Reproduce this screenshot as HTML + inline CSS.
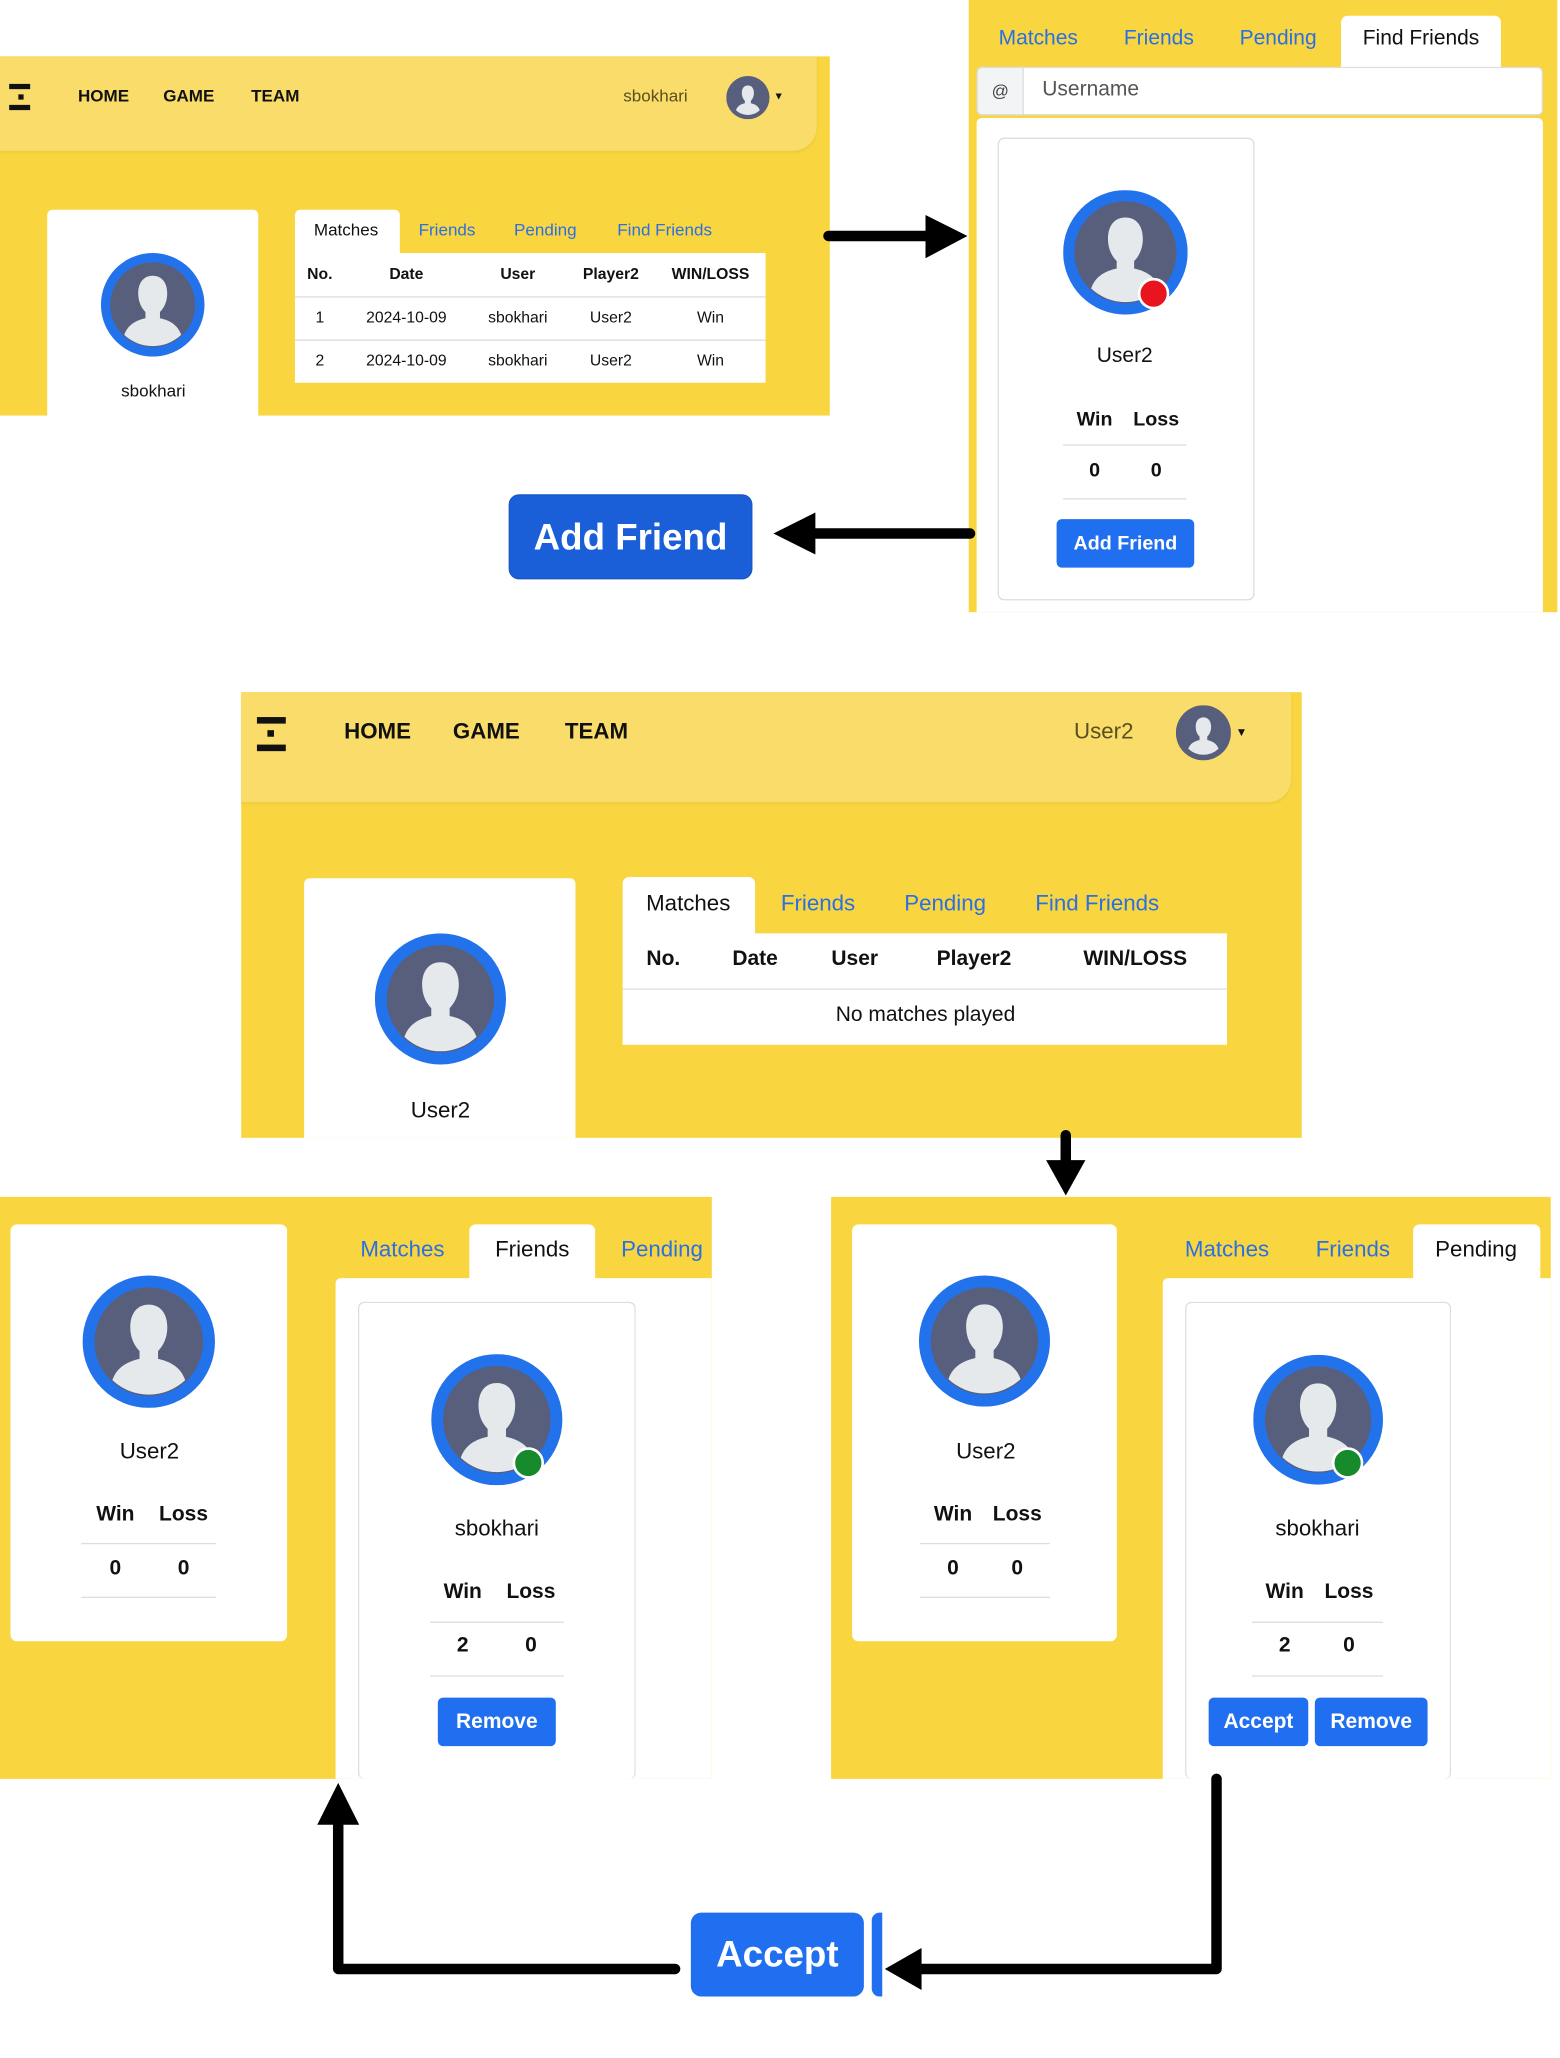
<!DOCTYPE html>
<html><head><meta charset="utf-8"><style>
html,body{margin:0;padding:0;background:#fff;width:1560px;height:2058px;overflow:hidden}
#w{position:absolute;left:0;top:0;width:1190px;height:1570px;transform:scale(1.3109);transform-origin:0 0;font-family:"Liberation Sans",sans-serif;color:#111}
.a{position:absolute}
.t{position:absolute;white-space:nowrap;transform:translate(-50%,-50%);line-height:1}
.b{font-weight:bold}
.y{background:#f9d63f}
.nav{background:#fadc6a;border-bottom-right-radius:18px;box-shadow:0 1px 2px rgba(0,0,0,.06)}
.wh{background:#fff}
.card{background:#fff;border:1px solid #ddd;border-radius:5px;box-sizing:border-box}
.blue{color:#2a6fe3}
.btn{position:absolute;background:#1f6ff0;color:#fff;font-weight:bold;border-radius:4px;display:flex;align-items:center;justify-content:center}
.ln{position:absolute;height:1px;background:#ddd}
svg.av{position:absolute}
</style></head><body><div id="w">

<!-- Panel 1 -->
<div class="a y" style="left:0;top:43px;width:633px;height:274px"></div>
<div class="a nav" style="left:0;top:43px;width:623px;height:72px"></div>
<div class="a" style="left:7px;top:64px;width:16px;height:4px;background:#111"></div>
<div class="a" style="left:14px;top:72px;width:4px;height:4px;background:#111"></div>
<div class="a" style="left:7px;top:80px;width:16px;height:4px;background:#111"></div>
<div class="t b" style="left:79px;top:73px;font-size:13px">HOME</div>
<div class="t b" style="left:144px;top:73px;font-size:13px">GAME</div>
<div class="t b" style="left:210px;top:73px;font-size:13px">TEAM</div>
<div class="t" style="left:500px;top:73px;font-size:13px;color:#5a4f1f">sbokhari</div>
<svg class="av" style="left:554px;top:58px" width="33" height="33" viewBox="0 0 100 100"><circle cx="50" cy="50" r="50" fill="#585f7d"/><path d="M50 22c-9 0-14 7-14 17c0 8 3 14 7 18v6c-9 2-17 6-20.5 16A40 40 0 0 0 77.5 79c-3.5-10-11.5-14-20.5-16v-6c4-4 7-10 7-18c0-10-5-17-14-17z" fill="#e6e9eb"/></svg>
<div class="t" style="left:594px;top:74px;font-size:8px">▼</div>

<div class="a wh" style="left:36px;top:160px;width:161px;height:157px;border-radius:4px 4px 0 0"></div>
<svg class="av" style="left:77px;top:193px" width="79" height="79" viewBox="0 0 100 100"><circle cx="50" cy="50" r="50" fill="#2272ec"/><circle cx="50" cy="50" r="41" fill="#585f7d"/><path d="M50 22c-9 0-14 7-14 17c0 8 3 14 7 18v6c-9 2-17 6-20.5 16A40 40 0 0 0 77.5 79c-3.5-10-11.5-14-20.5-16v-6c4-4 7-10 7-18c0-10-5-17-14-17z" fill="#e6e9eb"/></svg>
<div class="t" style="left:117px;top:298px;font-size:13px">sbokhari</div>

<div class="a wh" style="left:225px;top:160px;width:80px;height:34px;border-radius:4px 4px 0 0"></div>
<div class="t" style="left:264px;top:175px;font-size:13px">Matches</div>
<div class="t blue" style="left:341px;top:175px;font-size:13px">Friends</div>
<div class="t blue" style="left:416px;top:175px;font-size:13px">Pending</div>
<div class="t blue" style="left:507px;top:175px;font-size:13px">Find Friends</div>
<div class="a wh" style="left:225px;top:193px;width:359px;height:99px"></div>
<div class="ln" style="left:225px;top:226px;width:359px"></div>
<div class="ln" style="left:225px;top:259px;width:359px"></div>
<div class="t b" style="left:244px;top:209px;font-size:12px">No.</div>
<div class="t b" style="left:310px;top:209px;font-size:12px">Date</div>
<div class="t b" style="left:395px;top:209px;font-size:12px">User</div>
<div class="t b" style="left:466px;top:209px;font-size:12px">Player2</div>
<div class="t b" style="left:542px;top:209px;font-size:12px">WIN/LOSS</div>
<div class="t" style="left:244px;top:242px;font-size:12px">1</div>
<div class="t" style="left:310px;top:242px;font-size:12px">2024-10-09</div>
<div class="t" style="left:395px;top:242px;font-size:12px">sbokhari</div>
<div class="t" style="left:466px;top:242px;font-size:12px">User2</div>
<div class="t" style="left:542px;top:242px;font-size:12px">Win</div>
<div class="t" style="left:244px;top:275px;font-size:12px">2</div>
<div class="t" style="left:310px;top:275px;font-size:12px">2024-10-09</div>
<div class="t" style="left:395px;top:275px;font-size:12px">sbokhari</div>
<div class="t" style="left:466px;top:275px;font-size:12px">User2</div>
<div class="t" style="left:542px;top:275px;font-size:12px">Win</div>

<!-- Panel 2 -->
<div class="a y" style="left:739px;top:0;width:449px;height:467px"></div>
<div class="t blue" style="left:792px;top:30px;font-size:16px">Matches</div>
<div class="t blue" style="left:884px;top:30px;font-size:16px">Friends</div>
<div class="t blue" style="left:975px;top:30px;font-size:16px">Pending</div>
<div class="a wh" style="left:1023px;top:12px;width:122px;height:40px;border-radius:5px 5px 0 0"></div>
<div class="t" style="left:1084px;top:30px;font-size:16px">Find Friends</div>
<div class="a wh" style="left:745px;top:51px;width:432px;height:37px;border:1px solid #ddd;border-radius:4px;box-sizing:border-box"></div>
<div class="a" style="left:745px;top:51px;width:36px;height:37px;background:#f3f4f5;border:1px solid #ddd;border-radius:4px 0 0 4px;box-sizing:border-box"></div>
<div class="t" style="left:763px;top:69px;font-size:13px;color:#444">@</div>
<div class="t" style="left:832px;top:69px;font-size:16px;color:#555">Username</div>
<div class="a wh" style="left:745px;top:90px;width:432px;height:377px;border-radius:4px 4px 0 0"></div>
<div class="a card" style="left:761px;top:105px;width:196px;height:353px"></div>
<svg class="av" style="left:811px;top:145px" width="95" height="95" viewBox="0 0 100 100"><circle cx="50" cy="50" r="50" fill="#2272ec"/><circle cx="50" cy="50" r="41" fill="#585f7d"/><path d="M50 22c-9 0-14 7-14 17c0 8 3 14 7 18v6c-9 2-17 6-20.5 16A40 40 0 0 0 77.5 79c-3.5-10-11.5-14-20.5-16v-6c4-4 7-10 7-18c0-10-5-17-14-17z" fill="#e6e9eb"/></svg>
<div class="a" style="left:868px;top:212px;width:20px;height:20px;border-radius:50%;background:#e8141e;border:2px solid #fff"></div>
<div class="t" style="left:858px;top:272px;font-size:16px">User2</div>
<div class="t b" style="left:835px;top:320px;font-size:15px">Win</div>
<div class="t b" style="left:882px;top:320px;font-size:15px">Loss</div>
<div class="ln" style="left:811px;top:339px;width:94px"></div>
<div class="t b" style="left:835px;top:359px;font-size:15px">0</div>
<div class="t b" style="left:882px;top:359px;font-size:15px">0</div>
<div class="ln" style="left:811px;top:380px;width:94px"></div>
<div class="btn" style="left:806px;top:396px;width:105px;height:37px;font-size:15px">Add Friend</div>

<div class="btn" style="left:388px;top:377px;width:186px;height:65px;font-size:28px;background:#1b5fd8;border-radius:8px;border:1px solid #1a56c4;box-sizing:border-box">Add Friend</div>

<!-- Panel 3 -->
<div class="a y" style="left:184px;top:528px;width:809px;height:340px"></div>
<div class="a nav" style="left:184px;top:528px;width:801px;height:84px"></div>
<div class="a" style="left:196px;top:547px;width:22px;height:5px;background:#111"></div>
<div class="a" style="left:204px;top:557px;width:5px;height:5px;background:#111"></div>
<div class="a" style="left:196px;top:568px;width:22px;height:5px;background:#111"></div>
<div class="t b" style="left:288px;top:558px;font-size:17px">HOME</div>
<div class="t b" style="left:371px;top:558px;font-size:17px">GAME</div>
<div class="t b" style="left:455px;top:558px;font-size:17px">TEAM</div>
<div class="t" style="left:842px;top:558px;font-size:17px;color:#5a4f1f">User2</div>
<svg class="av" style="left:897px;top:538px" width="42" height="42" viewBox="0 0 100 100"><circle cx="50" cy="50" r="50" fill="#585f7d"/><path d="M50 22c-9 0-14 7-14 17c0 8 3 14 7 18v6c-9 2-17 6-20.5 16A40 40 0 0 0 77.5 79c-3.5-10-11.5-14-20.5-16v-6c4-4 7-10 7-18c0-10-5-17-14-17z" fill="#e6e9eb"/></svg>
<div class="t" style="left:947px;top:559px;font-size:9px">▼</div>

<div class="a wh" style="left:232px;top:670px;width:207px;height:198px;border-radius:4px 4px 0 0"></div>
<svg class="av" style="left:286px;top:712px" width="100" height="100" viewBox="0 0 100 100"><circle cx="50" cy="50" r="50" fill="#2272ec"/><circle cx="50" cy="50" r="41" fill="#585f7d"/><path d="M50 22c-9 0-14 7-14 17c0 8 3 14 7 18v6c-9 2-17 6-20.5 16A40 40 0 0 0 77.5 79c-3.5-10-11.5-14-20.5-16v-6c4-4 7-10 7-18c0-10-5-17-14-17z" fill="#e6e9eb"/></svg>
<div class="t" style="left:336px;top:847px;font-size:17px">User2</div>

<div class="a wh" style="left:475px;top:669px;width:101px;height:44px;border-radius:5px 5px 0 0"></div>
<div class="t" style="left:525px;top:689px;font-size:17px">Matches</div>
<div class="t blue" style="left:624px;top:689px;font-size:17px">Friends</div>
<div class="t blue" style="left:721px;top:689px;font-size:17px">Pending</div>
<div class="t blue" style="left:837px;top:689px;font-size:17px">Find Friends</div>
<div class="a wh" style="left:475px;top:712px;width:461px;height:85px"></div>
<div class="ln" style="left:475px;top:754px;width:461px"></div>
<div class="t b" style="left:506px;top:732px;font-size:16px">No.</div>
<div class="t b" style="left:576px;top:732px;font-size:16px">Date</div>
<div class="t b" style="left:652px;top:732px;font-size:16px">User</div>
<div class="t b" style="left:743px;top:732px;font-size:16px">Player2</div>
<div class="t b" style="left:866px;top:732px;font-size:16px">WIN/LOSS</div>
<div class="t" style="left:706px;top:775px;font-size:16px">No matches played</div>

<!-- Panel 4 -->
<div class="a y" style="left:0;top:913px;width:543px;height:444px"></div>
<div class="a card" style="left:8px;top:934px;width:211px;height:318px;border:none"></div>
<svg class="av" style="left:63px;top:973px" width="101" height="101" viewBox="0 0 100 100"><circle cx="50" cy="50" r="50" fill="#2272ec"/><circle cx="50" cy="50" r="41" fill="#585f7d"/><path d="M50 22c-9 0-14 7-14 17c0 8 3 14 7 18v6c-9 2-17 6-20.5 16A40 40 0 0 0 77.5 79c-3.5-10-11.5-14-20.5-16v-6c4-4 7-10 7-18c0-10-5-17-14-17z" fill="#e6e9eb"/></svg>
<div class="t" style="left:114px;top:1107px;font-size:17px">User2</div>
<div class="t b" style="left:88px;top:1156px;font-size:16px">Win</div>
<div class="t b" style="left:140px;top:1156px;font-size:16px">Loss</div>
<div class="ln" style="left:62px;top:1177px;width:103px"></div>
<div class="t b" style="left:88px;top:1197px;font-size:16px">0</div>
<div class="t b" style="left:140px;top:1197px;font-size:16px">0</div>
<div class="ln" style="left:62px;top:1218px;width:103px"></div>
<div class="t blue" style="left:307px;top:953px;font-size:17px">Matches</div>
<div class="a wh" style="left:358px;top:934px;width:96px;height:42px;border-radius:5px 5px 0 0"></div>
<div class="t" style="left:406px;top:953px;font-size:17px">Friends</div>
<div class="t blue" style="left:505px;top:953px;font-size:17px">Pending</div>
<div class="a wh" style="left:256px;top:975px;width:287px;height:382px;border-radius:4px 0 0 0"></div>
<div class="a card" style="left:273px;top:993px;width:212px;height:364px;border-bottom:none"></div>
<svg class="av" style="left:328px;top:1033px" width="102" height="100" viewBox="0 0 100 100"><circle cx="50" cy="50" r="50" fill="#2272ec"/><circle cx="50" cy="50" r="41" fill="#585f7d"/><path d="M50 22c-9 0-14 7-14 17c0 8 3 14 7 18v6c-9 2-17 6-20.5 16A40 40 0 0 0 77.5 79c-3.5-10-11.5-14-20.5-16v-6c4-4 7-10 7-18c0-10-5-17-14-17z" fill="#e6e9eb"/></svg>
<div class="a" style="left:391px;top:1104px;width:20px;height:20px;border-radius:50%;background:#178a2b;border:2px solid #fff"></div>
<div class="t" style="left:379px;top:1166px;font-size:17px">sbokhari</div>
<div class="t b" style="left:353px;top:1215px;font-size:16px">Win</div>
<div class="t b" style="left:405px;top:1215px;font-size:16px">Loss</div>
<div class="ln" style="left:328px;top:1237px;width:102px"></div>
<div class="t b" style="left:353px;top:1256px;font-size:16px">2</div>
<div class="t b" style="left:405px;top:1256px;font-size:16px">0</div>
<div class="ln" style="left:328px;top:1278px;width:102px"></div>
<div class="btn" style="left:334px;top:1295px;width:90px;height:37px;font-size:16px">Remove</div>

<!-- Panel 5 -->
<div class="a y" style="left:634px;top:913px;width:549px;height:444px"></div>
<div class="a card" style="left:650px;top:934px;width:202px;height:318px;border:none"></div>
<svg class="av" style="left:701px;top:973px" width="100" height="100" viewBox="0 0 100 100"><circle cx="50" cy="50" r="50" fill="#2272ec"/><circle cx="50" cy="50" r="41" fill="#585f7d"/><path d="M50 22c-9 0-14 7-14 17c0 8 3 14 7 18v6c-9 2-17 6-20.5 16A40 40 0 0 0 77.5 79c-3.5-10-11.5-14-20.5-16v-6c4-4 7-10 7-18c0-10-5-17-14-17z" fill="#e6e9eb"/></svg>
<div class="t" style="left:752px;top:1107px;font-size:17px">User2</div>
<div class="t b" style="left:727px;top:1156px;font-size:16px">Win</div>
<div class="t b" style="left:776px;top:1156px;font-size:16px">Loss</div>
<div class="ln" style="left:702px;top:1177px;width:99px"></div>
<div class="t b" style="left:727px;top:1197px;font-size:16px">0</div>
<div class="t b" style="left:776px;top:1197px;font-size:16px">0</div>
<div class="ln" style="left:702px;top:1218px;width:99px"></div>
<div class="t blue" style="left:936px;top:953px;font-size:17px">Matches</div>
<div class="t blue" style="left:1032px;top:953px;font-size:17px">Friends</div>
<div class="a wh" style="left:1078px;top:934px;width:97px;height:42px;border-radius:5px 5px 0 0"></div>
<div class="t" style="left:1126px;top:953px;font-size:17px">Pending</div>
<div class="a wh" style="left:887px;top:975px;width:296px;height:382px;border-radius:4px 0 0 0"></div>
<div class="a card" style="left:904px;top:993px;width:203px;height:364px;border-bottom:none"></div>
<svg class="av" style="left:956px;top:1033px" width="99" height="100" viewBox="0 0 100 100"><circle cx="50" cy="50" r="50" fill="#2272ec"/><circle cx="50" cy="50" r="41" fill="#585f7d"/><path d="M50 22c-9 0-14 7-14 17c0 8 3 14 7 18v6c-9 2-17 6-20.5 16A40 40 0 0 0 77.5 79c-3.5-10-11.5-14-20.5-16v-6c4-4 7-10 7-18c0-10-5-17-14-17z" fill="#e6e9eb"/></svg>
<div class="a" style="left:1016px;top:1104px;width:20px;height:20px;border-radius:50%;background:#178a2b;border:2px solid #fff"></div>
<div class="t" style="left:1005px;top:1166px;font-size:17px">sbokhari</div>
<div class="t b" style="left:980px;top:1215px;font-size:16px">Win</div>
<div class="t b" style="left:1029px;top:1215px;font-size:16px">Loss</div>
<div class="ln" style="left:955px;top:1237px;width:100px"></div>
<div class="t b" style="left:980px;top:1256px;font-size:16px">2</div>
<div class="t b" style="left:1029px;top:1256px;font-size:16px">0</div>
<div class="ln" style="left:955px;top:1278px;width:100px"></div>
<div class="btn" style="left:922px;top:1295px;width:76px;height:37px;font-size:16px">Accept</div>
<div class="btn" style="left:1003px;top:1295px;width:86px;height:37px;font-size:16px">Remove</div>

<!-- Big accept -->
<div class="btn" style="left:527px;top:1459px;width:132px;height:64px;font-size:28px;border-radius:8px">Accept</div>
<div class="a" style="left:665px;top:1459px;width:8px;height:64px;background:#1f6ff0;border-radius:6px 0 0 6px"></div>

<!-- Arrows -->
<svg class="a" style="left:0;top:0" width="1190" height="1570" viewBox="0 0 1190 1570">
<g stroke="#000" stroke-width="8" fill="none" stroke-linecap="round">
<line x1="632" y1="180" x2="712" y2="180"/>
<line x1="740" y1="407" x2="618" y2="407"/>
<line x1="813" y1="866" x2="813" y2="890"/>
<polyline stroke-linejoin="round" points="928,1357 928,1502 700,1502"/>
<polyline stroke-linejoin="round" points="515,1502 258,1502 258,1390"/>
</g>
<polygon points="706,164 738,180 706,197" fill="#000"/>
<polygon points="622,391 590,407 622,423" fill="#000"/>
<polygon points="798,885 828,885 813,912" fill="#000"/>
<polygon points="703,1486 675,1502 703,1518" fill="#000"/>
<polygon points="242,1392 258,1360 274,1392" fill="#000"/>
</svg>
</div></body></html>
